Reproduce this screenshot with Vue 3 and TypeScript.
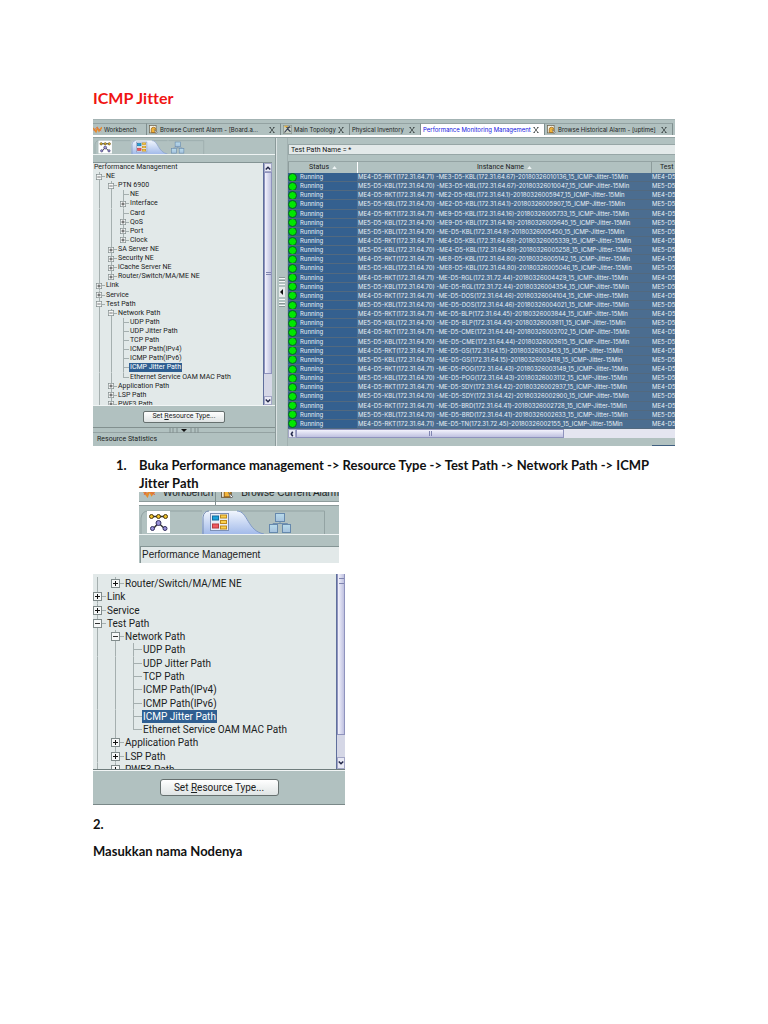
<script setup lang="ts">
type Mark = 'plus' | 'minus' | 'leaf'

interface TreeRow {
  label: string
  level: number
  mark: Mark
  last?: boolean
  selected?: boolean
}

const upperRows: TreeRow[] = [
  { label: 'NE', level: 0, mark: 'minus' },
  { label: 'PTN 6900', level: 1, mark: 'minus' },
  { label: 'NE', level: 2, mark: 'leaf' },
  { label: 'Interface', level: 2, mark: 'plus' },
  { label: 'Card', level: 2, mark: 'leaf' },
  { label: 'QoS', level: 2, mark: 'plus' },
  { label: 'Port', level: 2, mark: 'plus' },
  { label: 'Clock', level: 2, mark: 'plus', last: true },
  { label: 'SA Server NE', level: 1, mark: 'plus' },
  { label: 'Security NE', level: 1, mark: 'plus' },
  { label: 'iCache Server NE', level: 1, mark: 'plus' },
]

const lowerRows: TreeRow[] = [
  { label: 'Router/Switch/MA/ME NE', level: 1, mark: 'plus', last: true },
  { label: 'Link', level: 0, mark: 'plus' },
  { label: 'Service', level: 0, mark: 'plus' },
  { label: 'Test Path', level: 0, mark: 'minus' },
  { label: 'Network Path', level: 1, mark: 'minus' },
  { label: 'UDP Path', level: 2, mark: 'leaf' },
  { label: 'UDP Jitter Path', level: 2, mark: 'leaf' },
  { label: 'TCP Path', level: 2, mark: 'leaf' },
  { label: 'ICMP Path(IPv4)', level: 2, mark: 'leaf' },
  { label: 'ICMP Path(IPv6)', level: 2, mark: 'leaf' },
  { label: 'ICMP Jitter Path', level: 2, mark: 'leaf', selected: true },
  { label: 'Ethernet Service OAM MAC Path', level: 2, mark: 'leaf', last: true },
  { label: 'Application Path', level: 1, mark: 'plus' },
  { label: 'LSP Path', level: 1, mark: 'plus' },
  { label: 'PWE3 Path', level: 1, mark: 'plus' },
]

const trees: { name: string; root: string; rows: TreeRow[] }[] = [
  { name: 'small', root: 'Performance Management', rows: [...upperRows, ...lowerRows] },
  { name: 'large', root: '', rows: lowerRows },
]

const targets: [string, string][] = [
  ['ME3-D5-KBL(172.31.64.67)', '20180326010136'],
  ['ME3-D5-KBL(172.31.64.67)', '20180326010047'],
  ['ME2-D5-KBL(172.31.64.1)', '20180326005947'],
  ['ME2-D5-KBL(172.31.64.1)', '20180326005907'],
  ['ME9-D5-KBL(172.31.64.16)', '20180326005733'],
  ['ME9-D5-KBL(172.31.64.16)', '20180326005645'],
  ['ME-D5-KBL(172.31.64.8)', '20180326005450'],
  ['ME4-D5-KBL(172.31.64.68)', '20180326005339'],
  ['ME4-D5-KBL(172.31.64.68)', '20180326005258'],
  ['ME8-D5-KBL(172.31.64.80)', '20180326005142'],
  ['ME8-D5-KBL(172.31.64.80)', '20180326005046'],
  ['ME-D5-RGL(172.31.72.44)', '20180326004429'],
  ['ME-D5-RGL(172.31.72.44)', '20180326004354'],
  ['ME-D5-DOS(172.31.64.46)', '20180326004104'],
  ['ME-D5-DOS(172.31.64.46)', '20180326004021'],
  ['ME-D5-BLP(172.31.64.45)', '20180326003844'],
  ['ME-D5-BLP(172.31.64.45)', '20180326003811'],
  ['ME-D5-CME(172.31.64.44)', '20180326003702'],
  ['ME-D5-CME(172.31.64.44)', '20180326003615'],
  ['ME-D5-GS(172.31.64.15)', '20180326003453'],
  ['ME-D5-GS(172.31.64.15)', '20180326003418'],
  ['ME-D5-POG(172.31.64.43)', '20180326003149'],
  ['ME-D5-POG(172.31.64.43)', '20180326003112'],
  ['ME-D5-SDY(172.31.64.42)', '20180326002937'],
  ['ME-D5-SDY(172.31.64.42)', '20180326002900'],
  ['ME-D5-BRD(172.31.64.41)', '20180326002728'],
  ['ME-D5-BRD(172.31.64.41)', '20180326002633'],
  ['ME-D5-TN(172.31.72.45)', '20180326002155'],
]

// The seventh row breaks the alternation of source nodes.
const fromRkt = (i: number): boolean => (i < 7 ? i % 2 === 0 && i !== 6 : i % 2 === 1)

const instances = targets.map(([target, stamp], i) => {
  const source = fromRkt(i) ? 'ME4-D5-RKT' : 'ME5-D5-KBL'
  const address = fromRkt(i) ? '172.31.64.71' : '172.31.64.70'
  return {
    name: `${source}(${address}) -${target}-${stamp}_15_ICMP-Jitter-15Min`,
    source,
  }
})

const tabs = [
  { label: 'Workbench', icon: 'i-bench', size: 'w54', closable: false, active: false },
  { label: 'Browse Current Alarm - [Board.a...', icon: 'i-alarm', size: 'w134', closable: true, active: false },
  { label: 'Main Topology', icon: 'i-topo', size: 'w69', closable: true, active: false },
  { label: 'Physical Inventory', icon: '', size: 'w71', closable: true, active: false },
  { label: 'Performance Monitoring Management', icon: '', size: 'w124', closable: true, active: true },
  { label: 'Browse Historical Alarm - [uptime]', icon: 'i-alarm', size: 'w128', closable: true, active: false },
]

const viewTabs = [
  { id: 'v-nodes', label: 'Object view' },
  { id: 'v-resource', label: 'Resource view' },
  { id: 'v-groups', label: 'Group view' },
]
</script>

<template>
  <main class="doc">
    <svg class="defs" aria-hidden="true">
      <defs>
        <linearGradient id="tabfill" x1="0" y1="0" x2="0" y2="1">
          <stop offset="0" stop-color="#f0f5fd" />
          <stop offset="1" stop-color="#a3bbea" />
        </linearGradient>
        <linearGradient id="boxfill" x1="0" y1="0" x2="0" y2="1">
          <stop offset="0" stop-color="#b9dcec" />
          <stop offset="1" stop-color="#a4c1dd" />
        </linearGradient>
      </defs>
      <symbol id="v-nodes" viewBox="0 0 62 24">
        <path d="M1 24V8Q2 1 8 1H62" fill="none" stroke="#93a3a3" />
        <rect x="7" y="1" width="23" height="22" fill="#fff" />
        <path d="M12 6.500H26M18.500 13L13 19M18.500 13L25 19" fill="none" stroke="#333" stroke-width="1.500" />
        <g fill="#f2c42c" stroke="#4b3a10"><circle cx="11.500" cy="6.500" r="2" /><circle cx="18.500" cy="6.500" r="2" /><circle cx="25.500" cy="6.500" r="2" /></g>
        <g fill="#9a93d8" stroke="#33305f"><circle cx="18.500" cy="13" r="2.500" /><circle cx="12.500" cy="18.500" r="2" /><circle cx="25" cy="18.500" r="2" /></g>
      </symbol>
      <symbol id="v-resource" viewBox="0 0 62 24">
        <path d="M38 1H62" stroke="#93a3a3" />
        <path d="M0 24V7Q1 1 7 1H35C46 1 45 21 62 24Z" fill="url(#tabfill)" />
        <path d="M1 24V7Q2 1 7 1" fill="none" stroke="#7289ac" />
        <path d="M35 1C46 1 45 21 62 24" fill="none" stroke="#7f99c8" />
        <rect x="8.500" y="3.500" width="18" height="17" fill="#e9edf6" stroke="#7d8fb5" />
        <rect x="10.500" y="6" width="6" height="4" fill="#1ba2dc" stroke="#136b9c" />
        <rect x="10.500" y="14" width="6" height="4" fill="#f2595f" stroke="#b53a3e" />
        <g fill="#fbd04c" stroke="#bd8a1c"><rect x="18.500" y="5" width="6" height="3" /><rect x="18.500" y="10.500" width="6" height="3" /><rect x="18.500" y="16" width="6" height="3" /></g>
      </symbol>
      <symbol id="v-groups" viewBox="0 0 62 24">
        <path d="M0 1H60.500V24" fill="none" stroke="#93a3a3" />
        <path d="M16 11V14M9 16V13.500H23.500V16" fill="none" stroke="#6f8fae" />
        <g fill="url(#boxfill)" stroke="#6689ad"><rect x="11.500" y="3.500" width="9" height="8" /><rect x="5.500" y="14.500" width="8" height="8" /><rect x="18.500" y="14.500" width="8" height="8" /></g>
      </symbol>
      <symbol id="i-bench" viewBox="0 0 12 12">
        <path d="M0 4L4 9L6 4L8 8L12 3" fill="none" stroke="#e58a2c" stroke-width="2" />
        <path d="M1 8L5 3L8 6L11 8" fill="none" stroke="#d9694a" />
      </symbol>
      <symbol id="i-alarm" viewBox="0 0 12 12">
        <rect x="0.500" y="0.500" width="9" height="10" fill="#f7f3e6" stroke="#6c6450" />
        <path d="M3 10V6Q3 3 6 3T9 6V10Z" fill="#f3b53a" stroke="#94631a" />
        <path d="M7 6L11 10L9 11Z" fill="#fff" stroke="#555" stroke-width="0.700" />
      </symbol>
      <symbol id="i-topo" viewBox="0 0 12 12">
        <rect x="0.500" y="0.500" width="11" height="11" fill="#c8cfc4" stroke="#8b9690" />
        <path d="M2 10L6 5L10 9M6 5L9 2M4 3H10" fill="none" stroke="#343d52" stroke-width="1.500" />
        <path d="M2 2H6" stroke="#e9b13b" stroke-width="2" />
      </symbol>
      <symbol id="i-close" viewBox="0 0 12 12">
        <path d="M2 1L10 11M10 1L2 11M1 1H4M8 1H11M1 11H4M8 11H11" fill="none" stroke="#333b3b" stroke-width="1.500" />
      </symbol>
      <symbol id="plus" viewBox="0 0 9 9">
        <rect x="0.500" y="0.500" width="8" height="8" fill="#f6f8f8" stroke="#808b8b" />
        <path d="M2 4.500H7M4.500 2V7" stroke="#111" />
      </symbol>
      <symbol id="minus" viewBox="0 0 9 9">
        <rect x="0.500" y="0.500" width="8" height="8" fill="#f6f8f8" stroke="#808b8b" />
        <path d="M2 4.500H7" stroke="#333" />
      </symbol>
    </svg>

    <h1>ICMP Jitter</h1>

    <section class="app" aria-label="Performance Monitoring Management">
      <nav class="tabs">
        <div v-for="tab in tabs" :key="tab.label" class="tab" :class="[tab.size, { active: tab.active }]">
          <svg v-if="tab.icon" class="tab-icon"><use :href="'#' + tab.icon" /></svg>
          <button type="button" class="tab-label">{{ tab.label }}</button>
          <button v-if="tab.closable" type="button" class="close" :aria-label="'Close ' + tab.label">
            <svg><use href="#i-close" /></svg>
          </button>
        </div>
      </nav>

      <div class="body">
        <aside class="left">
          <div class="views">
            <button v-for="view in viewTabs" :key="view.id" type="button" :aria-label="view.label">
              <svg><use :href="'#' + view.id" /></svg>
            </button>
          </div>
          <div class="treebox small">
            <ul class="tree">
              <li class="root">{{ trees[0].root }}</li>
              <li v-for="(row, r) in trees[0].rows" :key="r">
                <span v-for="n in row.level" :key="n" class="cell line"></span>
                <span class="cell line branch" :class="{ last: row.last }">
                  <button v-if="row.mark !== 'leaf'" type="button" :aria-label="'Toggle ' + row.label">
                    <svg><use :href="'#' + row.mark" /></svg>
                  </button>
                </span>
                <span class="label" :class="{ selected: row.selected }">{{ row.label }}</span>
              </li>
            </ul>
            <div class="vbar" aria-hidden="true">
              <span class="arrow"><svg viewBox="0 0 8 8"><path d="M1 6L4 3L7 6" /></svg></span>
              <span class="thumb"><i></i></span>
              <span class="track"></span>
              <span class="arrow"><svg viewBox="0 0 8 8"><path d="M1 2L4 5L7 2" /></svg></span>
            </div>
          </div>
          <div class="action">
            <button type="button" class="set">Set <u>R</u>esource Type...</button>
          </div>
          <div class="hsplit"><span><svg viewBox="0 0 30 5"><path d="M1 0V5M4 0V5M8 0V5M22 0V5M26 0V5M29 0V5" stroke="#839090" /><path d="M12 1H18L15 4Z" fill="#111" /></svg></span></div>
          <div class="stats">Resource Statistics</div>
        </aside>

        <div class="vsplit">
          <span><svg viewBox="0 0 6 30"><path d="M0 1.500H6M0 4.500H6M0 7.500H6M0 22.500H6M0 25.500H6M0 28.500H6" stroke="#f4f6f6" /><path d="M0 0.500H6M0 3.500H6M0 26.500H6M0 29.500H6" stroke="#8a9797" /><rect y="10" width="6" height="10" fill="#e6ebeb" /><path d="M4 12V18L1 15Z" fill="#111" /></svg></span>
        </div>

        <div class="right">
          <input class="filter" aria-label="Filter" value="Test Path Name = *" readonly />
          <table>
            <thead>
              <tr>
                <th>Status <svg viewBox="0 0 6 4"><path d="M0 4L3 0L6 4Z" /></svg></th>
                <th>Instance Name <svg viewBox="0 0 6 4"><path d="M0 4L3 0L6 4Z" /></svg></th>
                <th>Test Path</th>
              </tr>
            </thead>
            <tbody>
              <tr v-for="item in instances" :key="item.name">
                <td class="status"><i></i>Running</td>
                <td>{{ item.name }}</td>
                <td>{{ item.source }}</td>
              </tr>
            </tbody>
          </table>
          <div class="hbar" aria-hidden="true">
            <span class="arrow"><svg viewBox="0 0 8 8"><path d="M5 1L3 4L5 7" /></svg></span>
            <span class="thumb"><i></i></span>
            <span class="track"></span>
          </div>
          <div class="foot"><span></span></div>
        </div>
      </div>
    </section>

    <div class="step">
      <span class="num">1.</span>
      <div>
        <p>Buka Performance management -&gt; Resource Type -&gt; Test Path -&gt; Network Path -&gt; ICMP Jitter Path</p>
        <section class="closeup" aria-label="Resource view tab">
          <div class="cut">
            <span class="cut-tab first"><svg><use href="#i-bench" /></svg>Workbench</span>
            <span class="cut-tab"><svg><use href="#i-alarm" /></svg>Browse Current Alarm</span>
          </div>
          <div class="views big">
            <button v-for="view in viewTabs" :key="view.id" type="button" :aria-label="view.label">
              <svg><use :href="'#' + view.id" /></svg>
            </button>
          </div>
          <div class="pm">Performance Management</div>
        </section>
      </div>
    </div>

    <section class="panel" aria-label="Resource type tree">
      <div class="treebox large">
        <ul class="tree">
          <li v-for="(row, r) in trees[1].rows" :key="r">
            <span v-for="n in row.level" :key="n" class="cell line"></span>
            <span class="cell line branch" :class="{ last: row.last }">
              <button v-if="row.mark !== 'leaf'" type="button" :aria-label="'Toggle ' + row.label">
                <svg><use :href="'#' + row.mark" /></svg>
              </button>
            </span>
            <span class="label" :class="{ selected: row.selected }">{{ row.label }}</span>
          </li>
        </ul>
        <div class="vbar" aria-hidden="true">
          <span class="thumb"><i></i></span>
          <span class="track"></span>
          <span class="arrow"><svg viewBox="0 0 8 8"><path d="M1 2L4 5L7 2" /></svg></span>
        </div>
      </div>
      <div class="action">
        <button type="button" class="set">Set <u>R</u>esource Type...</button>
      </div>
    </section>

    <p class="second">2.</p>
    <p class="last-line">Masukkan nama Nodenya</p>
  </main>
</template>

<style>
html,
body {
  background: #fff;
}
</style>

<style scoped>
* {
  box-sizing: border-box;
}
.doc {
  padding: 88px 93px 40px;
  font: bold 13px/18px Lato, "Open Sans", sans-serif;
  font-variant-ligatures: none;
  color: #111;
}
.defs {
  position: absolute;
  width: 0;
  height: 0;
}
h1 {
  margin: 0 0 11px;
  font-size: 16px;
  line-height: 20px;
  color: #f01414;
}
p,
ul {
  margin: 0;
  padding: 0;
}
button {
  margin: 0;
  padding: 0;
  border: 0;
  background: none;
  font: inherit;
  color: inherit;
}
svg {
  display: block;
}

/* Application window */
.app {
  overflow: hidden;
  background: #b1c1c0;
  font: 7px/9px Roboto, Arial, sans-serif;
  color: #1b2222;
}
.tabs {
  display: flex;
  height: 18px;
  padding-top: 3px;
  border-top: 1px solid #a3b3b3;
  border-bottom: 2px solid #fff;
}
.tab {
  display: flex;
  flex: none;
  align-items: center;
  gap: 2px;
  overflow: hidden;
  padding-left: 2px;
  border-top: 1px solid #93a2a2;
  border-right: 1px solid #7f8e8e;
  white-space: nowrap;
  font: 6px/9px Inter, sans-serif;
}
.w54 { width: 54px; padding-left: 0; }
.w134 { width: 134px; }
.w69 { width: 69px; }
.w71 { width: 71px; }
.w124 { width: 124px; }
.w128 { width: 128px; }
.tab.active {
  background: #fff;
  color: #1212e0;
}
.tab-icon {
  flex: none;
  width: 9px;
  height: 9px;
}
.close {
  margin: 0 5px 0 auto;
}
.close svg {
  width: 6px;
  height: 6px;
}
.body {
  display: flex;
  height: 309px;
  border-top: 1px solid #93a3a3;
}
.left {
  display: flex;
  flex: none;
  flex-direction: column;
  width: 183px;
  border-right: 1px solid #8b9a9a;
}
.views {
  display: flex;
  padding: 2px 0 0 1px;
  border-bottom: 1px solid #eef3f3;
}
.views svg {
  width: 37px;
  height: 14px;
}
.treebox {
  display: flex;
  overflow: hidden;
  background: #e2e9e9;
}
.treebox.small {
  height: 243px;
  margin: 7px 3px 0 0;
  border-top: 1px solid #849494;
}
.tree {
  display: grid;
  flex: 1;
  grid-auto-rows: 1fr;
  list-style: none;
}
.small .tree {
  height: 246px;
}
.tree li {
  display: flex;
  align-items: center;
  min-height: 0;
  white-space: nowrap;
}
.tree .root {
  padding-left: 1px;
}
.cell {
  display: flex;
  align-items: center;
  justify-content: center;
  align-self: stretch;
  flex: none;
  width: 12px;
  min-height: 0;
  background: linear-gradient(#a5afaf, #a5afaf) center / 1px 100% no-repeat;
}
.cell.branch {
  background:
    linear-gradient(#a5afaf, #a5afaf) center / 1px 100% no-repeat,
    linear-gradient(#a5afaf, #a5afaf) right center / 50% 1px no-repeat;
}
.cell.last {
  background:
    linear-gradient(#a5afaf, #a5afaf) top center / 1px 50% no-repeat,
    linear-gradient(#a5afaf, #a5afaf) right center / 50% 1px no-repeat;
}
.cell svg {
  width: 6px;
  height: 6px;
}
.label {
  padding: 0 1px;
}
.label.selected {
  background: #2f5f92;
  color: #fff;
}
.vbar {
  display: flex;
  flex: none;
  flex-direction: column;
  width: 9px;
  border-left: 1px solid #5f6f9c;
  background: #d5d7e6;
}
.arrow {
  display: flex;
  flex: none;
  align-items: center;
  justify-content: center;
  width: 8px;
  height: 9px;
  border: 1px solid #a3a6c6;
  background: #e8e9f4;
}
.arrow svg {
  width: 6px;
  height: 6px;
}
.arrow path {
  fill: none;
  stroke: #23284a;
  stroke-width: 2;
}
.thumb {
  display: flex;
  align-items: center;
  justify-content: center;
  border: 1px solid #8f93bd;
  background: linear-gradient(90deg, #f2f2fc, #bfc1e0);
}
.vbar .thumb {
  flex: 1;
}
.vbar .thumb i {
  width: 5px;
  height: 3px;
  border: 1px solid #8085b0;
  border-width: 1px 0;
}
.vbar .track {
  height: 22px;
}
.action {
  display: flex;
  flex: none;
  align-items: center;
  justify-content: center;
}
.left .action {
  height: 22px;
  border-top: 1px solid #f1f5f5;
}
.set {
  width: 82px;
  height: 12px;
  border: 1px solid #66706f;
  border-radius: 2px;
  background: linear-gradient(#fff, #dfe4e4);
  line-height: 9px;
}
.hsplit {
  display: flex;
  justify-content: center;
  height: 6px;
  border-top: 1px solid #82908f;
  border-bottom: 1px solid #94a2a2;
}
.hsplit svg {
  width: 30px;
  height: 5px;
}
.stats {
  padding: 2px 0 0 4px;
}
.vsplit {
  display: flex;
  flex: none;
  align-items: center;
  justify-content: center;
  width: 12px;
  border-right: 1px solid #a1b0b0;
  border-left: 1px solid #dbe3e3;
}
.vsplit svg {
  width: 6px;
  height: 30px;
}
.right {
  display: flex;
  flex: 1;
  flex-direction: column;
  min-width: 0;
  overflow: hidden;
}
.filter {
  width: 100%;
  height: 11px;
  margin: 6px 0;
  padding: 0 2px;
  border: 1px solid #97a6a6;
  border-right: 0;
  background: #e3e9e9;
  font: 7px/9px Roboto, Arial, sans-serif;
  color: #111;
  outline: 0;
}
table,
thead {
  display: block;
}
tr {
  display: grid;
  grid-template-columns: 69px 294px 1fr;
  min-height: 0;
}
thead tr {
  height: 12px;
  border-top: 1px solid #94a3a3;
}
th {
  display: flex;
  align-items: center;
  justify-content: center;
  gap: 3px;
  overflow: hidden;
  padding: 0;
  border-left: 1px solid #8d9c9c;
  font-weight: normal;
  white-space: nowrap;
}
th:nth-child(2) {
  border-left-color: #fff;
}
th:last-child {
  justify-content: flex-start;
  padding-left: 8px;
}
th svg {
  width: 5px;
  height: 3px;
  fill: #eef4f4;
}
tbody {
  display: grid;
  grid-auto-rows: 1fr;
  height: 256px;
  background: #4b6d90;
  color: #e9eff5;
}
tbody tr {
  border-bottom: 1px solid #52697f;
}
td {
  display: flex;
  align-items: center;
  overflow: hidden;
  min-height: 0;
  padding: 0 0 0 1px;
  white-space: nowrap;
  font: 6px/8px Inter, sans-serif;
}
td.status {
  gap: 3px;
  padding: 0;
  background: #34608f;
}
.status i {
  width: 9px;
  height: 9px;
  border: 1px solid #0b5a2a;
  border-radius: 50%;
  background: #00e800;
}
.hbar {
  display: flex;
  flex: none;
  height: 9px;
  background: #e4e5f0;
}
.hbar .thumb {
  width: 268px;
  background: linear-gradient(#f2f2fc, #bfc1e0);
}
.hbar .thumb i {
  width: 3px;
  height: 5px;
  border: 1px solid #8085b0;
  border-width: 0 1px;
}
.foot {
  display: flex;
  flex: 1;
  align-items: flex-end;
  justify-content: flex-end;
}
.foot span {
  width: 23px;
  height: 1px;
  background: #3f5f80;
}

/* Numbered step with the enlarged view tabs */
.step {
  display: grid;
  grid-template-columns: 23px 1fr;
  margin: 10px 20px 11px 23px;
}
.closeup {
  width: 200px;
  height: 71px;
  overflow: hidden;
  background: #b1c1c0;
  font: 10px/13px "Liberation Sans", Arial, sans-serif;
  color: #1b2222;
}
.cut {
  display: flex;
  align-items: flex-end;
  height: 14px;
  margin-bottom: 4px;
  border-bottom: 1px solid #8d9b9b;
  box-shadow: inset 0 -3px #fff, inset 0 -4px #8d9b9b;
  overflow: hidden;
}
.cut-tab {
  display: flex;
  align-items: center;
  gap: 7px;
  height: 19px;
  padding: 0 0 6px 4px;
  white-space: nowrap;
}
.cut-tab.first {
  width: 93px;
  margin-right: 1px;
  border-right: 1px solid #7f8e8e;
}
.cut-tab svg {
  flex: none;
  width: 13px;
  height: 13px;
}
.views.big svg {
  width: 62px;
  height: 24px;
}
.views.big {
  padding: 0 0 0 1px;
}
.pm {
  height: 20px;
  margin: 11px 0 0 1px;
  padding: 1px;
  border-top: 1px solid #849494;
  border-left: 1px solid #849494;
  background: #e2e9e9;
}

/* Enlarged tree */
.panel {
  width: 252px;
  background: #b1c1c0;
  border-bottom: 1px solid #7a8888;
  font: 10px/13px Roboto, Arial, sans-serif;
  color: #1b2222;
}
.treebox.large {
  height: 196px;
  border-bottom: 1px solid #6f7d7d;
}
.large .tree {
  height: 199px;
  margin: 3px 0 0 -5px;
}
.large .cell {
  width: 18px;
}
.large .cell svg {
  width: 9px;
  height: 9px;
}
.large .vbar .thumb {
  align-items: flex-start;
  border-top: 0;
}
.large .vbar .thumb i {
  height: 6px;
  margin-top: 4px;
}
.large .vbar .arrow {
  height: 12px;
}
.panel .action {
  height: 34px;
  border-top: 1px solid #f1f5f5;
}
.panel .set {
  width: 119px;
  height: 17px;
  border-radius: 3px;
  line-height: 14px;
}
.second {
  margin-top: 10px;
}
.last-line {
  margin-top: 9px;
}
</style>
